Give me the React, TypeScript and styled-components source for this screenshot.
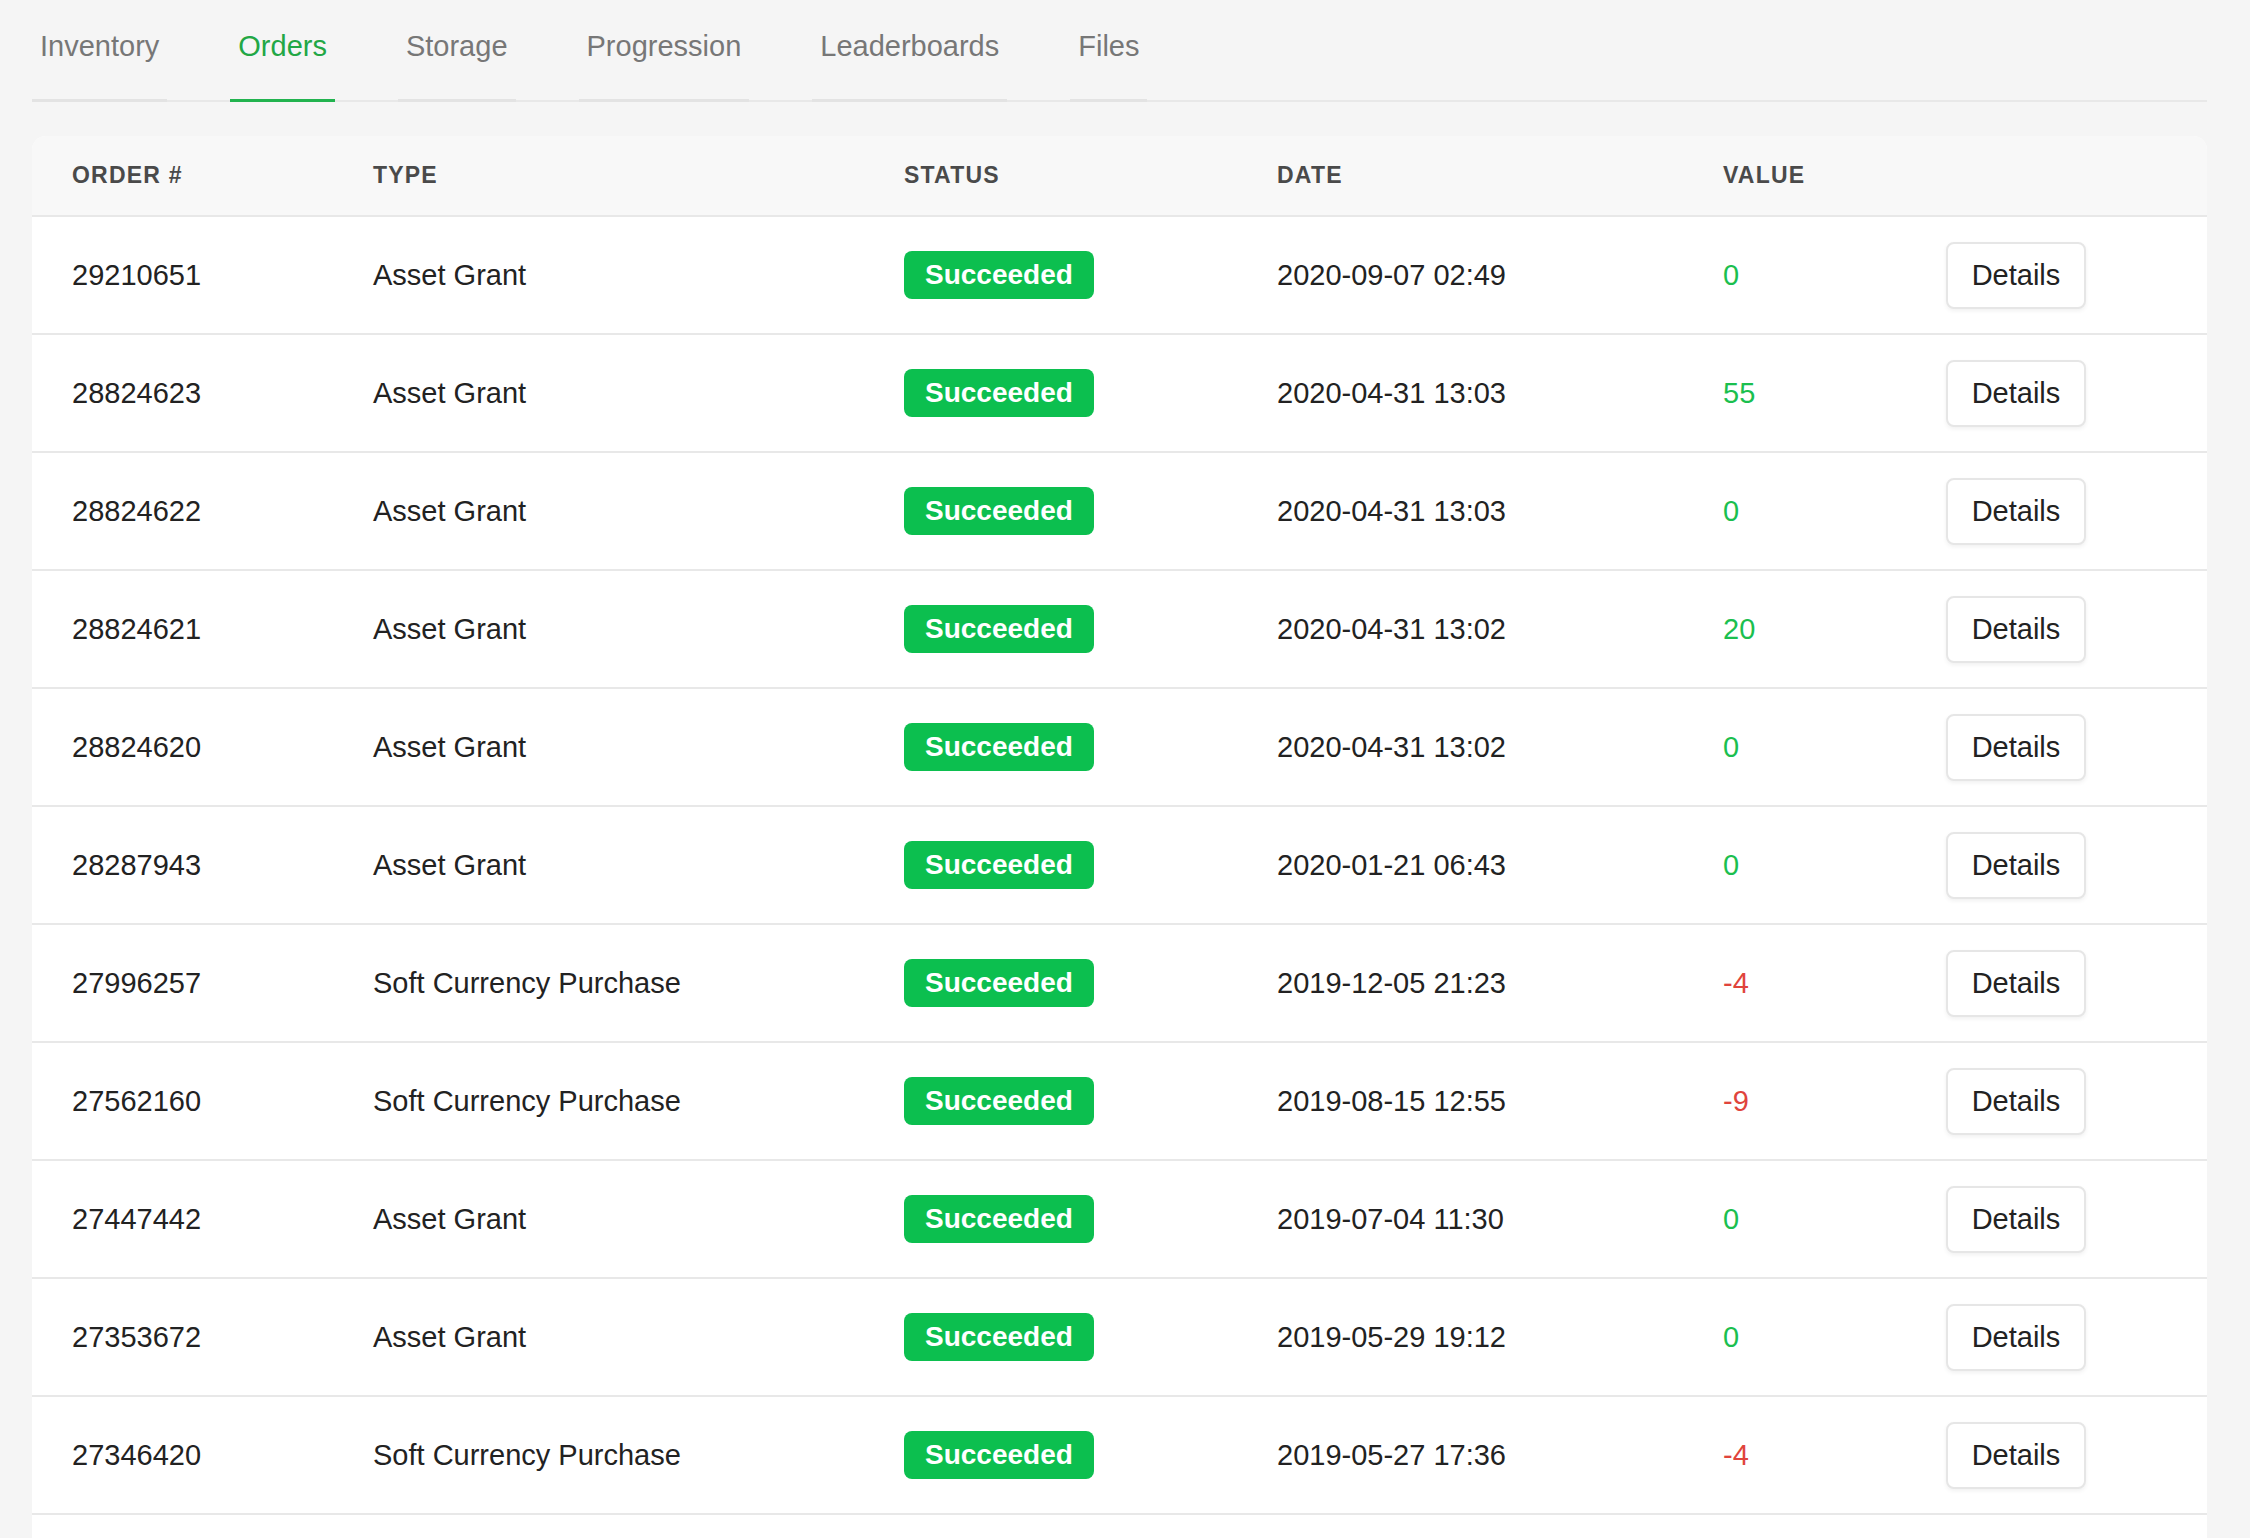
import React from "react";
import styled, { createGlobalStyle } from "styled-components";

const Global = createGlobalStyle`
  body { margin: 0; background: #f5f5f5; font-family: "Liberation Sans", Arial, sans-serif; }
`;

const Page = styled.div`
  padding: 0 43px 0 32px;
`;

const Tabs = styled.div`
  display: flex;
  gap: 63px;
  border-bottom: 2px solid #e8e8e8;
  height: 102px;
  box-sizing: border-box;
`;

const Tab = styled.div<{ $active?: boolean }>`
  display: flex;
  align-items: center;
  padding: 0 8px 6px;
  font-size: 29px;
  color: ${(p) => (p.$active ? "#22a745" : "#777")};
  border-bottom: 3px solid ${(p) => (p.$active ? "#22b34f" : "#e3e3e3")};
  margin-bottom: -2px;
`;

const Card = styled.div`
  margin-top: 34px;
  background: #fff;
  border-radius: 14px 14px 0 0;
  overflow: hidden;
  min-height: 1420px;
`;

const cols = "301px 531px 373px 446px 223px 1fr";

const Header = styled.div`
  display: grid;
  grid-template-columns: ${cols};
  grid-template-rows: 100%;
  padding-left: 40px;
  height: 81px;
  box-sizing: border-box;
  align-items: center;
  background: #f8f8f8;
  border-bottom: 2px solid #e8e8e8;
  font-size: 23px;
  font-weight: bold;
  letter-spacing: 1.2px;
  color: #4a4a4a;
`;

const Row = styled.div`
  display: grid;
  grid-template-columns: ${cols};
  grid-template-rows: 100%;
  padding-left: 40px;
  height: 118px;
  box-sizing: border-box;
  align-items: center;
  border-bottom: 2px solid #e8e8e8;
  font-size: 29px;
  color: #222;
`;

const Badge = styled.span`
  justify-self: start;
  background: #0cbf4f;
  color: #fff;
  font-weight: bold;
  font-size: 28px;
  height: 48px;
  padding: 0 21px;
  border-radius: 8px;
  display: inline-flex;
  align-items: center;
`;

const Value = styled.span<{ $neg: boolean }>`
  color: ${(p) => (p.$neg ? "#e0443c" : "#1bbf4f")};
`;

const Button = styled.button`
  justify-self: start;
  width: 140px;
  height: 67px;
  background: #fff;
  border: 2px solid #e6e6e6;
  border-radius: 8px;
  box-shadow: 0 2px 4px rgba(0,0,0,0.06);
  font-family: inherit;
  font-size: 29px;
  color: #222;
`;

const rows: [string, string, string, number][] = [
  ["29210651", "Asset Grant", "2020-09-07 02:49", 0],
  ["28824623", "Asset Grant", "2020-04-31 13:03", 55],
  ["28824622", "Asset Grant", "2020-04-31 13:03", 0],
  ["28824621", "Asset Grant", "2020-04-31 13:02", 20],
  ["28824620", "Asset Grant", "2020-04-31 13:02", 0],
  ["28287943", "Asset Grant", "2020-01-21 06:43", 0],
  ["27996257", "Soft Currency Purchase", "2019-12-05 21:23", -4],
  ["27562160", "Soft Currency Purchase", "2019-08-15 12:55", -9],
  ["27447442", "Asset Grant", "2019-07-04 11:30", 0],
  ["27353672", "Asset Grant", "2019-05-29 19:12", 0],
  ["27346420", "Soft Currency Purchase", "2019-05-27 17:36", -4],
];

export default function App() {
  const tabs = ["Inventory", "Orders", "Storage", "Progression", "Leaderboards", "Files"];
  return (
    <Page>
      <Global />
      <Tabs>
        {tabs.map((t) => (
          <Tab key={t} $active={t === "Orders"}>{t}</Tab>
        ))}
      </Tabs>
      <Card>
        <Header>
          <span>ORDER #</span><span>TYPE</span><span>STATUS</span><span>DATE</span><span>VALUE</span><span />
        </Header>
        {rows.map((r) => (
          <Row key={r[0]}>
            <span>{r[0]}</span>
            <span>{r[1]}</span>
            <Badge>Succeeded</Badge>
            <span>{r[2]}</span>
            <Value $neg={r[3] < 0}>{r[3]}</Value>
            <Button>Details</Button>
            <span />
          </Row>
        ))}
      </Card>
    </Page>
  );
}
